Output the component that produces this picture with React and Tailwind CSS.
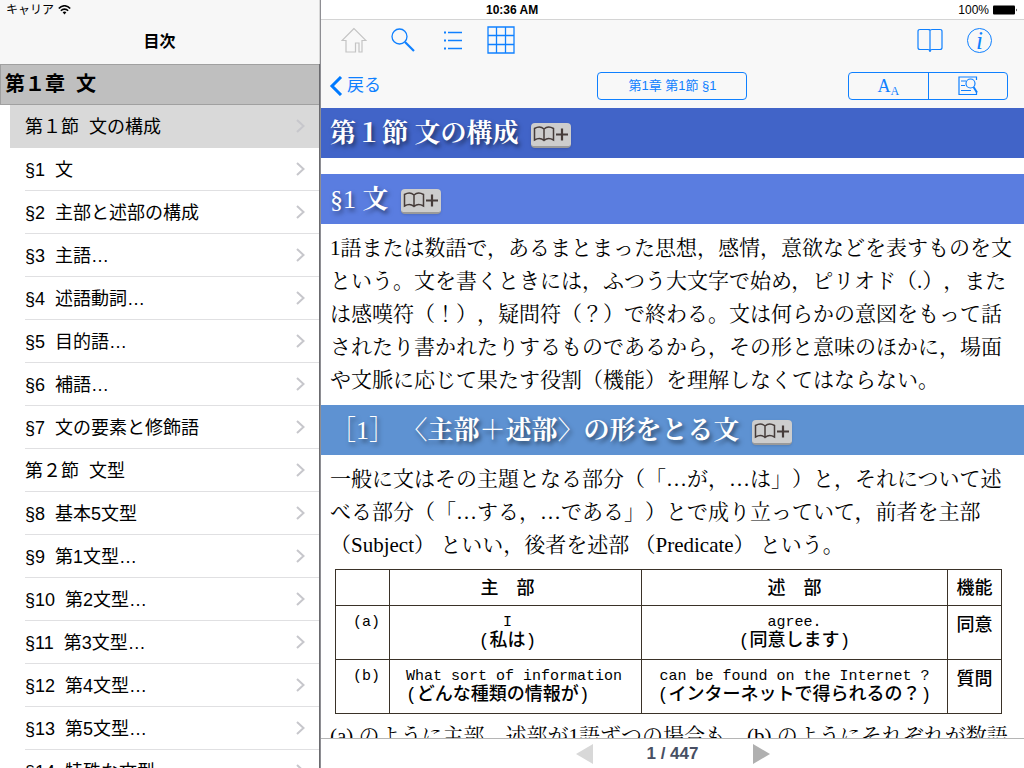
import React from "react";

const chapters = [
  { label: "第１節  文の構成", selected: true },
  { label: "§1  文" },
  { label: "§2  主部と述部の構成" },
  { label: "§3  主語…" },
  { label: "§4  述語動詞…" },
  { label: "§5  目的語…" },
  { label: "§6  補語…" },
  { label: "§7  文の要素と修飾語" },
  { label: "第２節  文型" },
  { label: "§8  基本5文型" },
  { label: "§9  第1文型…" },
  { label: "§10  第2文型…" },
  { label: "§11  第3文型…" },
  { label: "§12  第4文型…" },
  { label: "§13  第5文型…" },
  { label: "§14  特殊な文型" },
];

const Chevron = () => (
  <svg width="9" height="14" viewBox="0 0 9 14" fill="none" stroke="#c7c7cc" strokeWidth="2">
    <path d="M1 1l6.500 6L1 13" />
  </svg>
);

const BookmarkButton = () => (
  <button
    aria-label="しおりに追加"
    className="mt-1 flex h-[25px] w-10 items-center justify-center rounded border-b-2 border-[#9a9a9a] bg-[#cdcdcd] shadow"
  >
    <svg width="36" height="18" viewBox="0 0 36 18" fill="none" stroke="#463c3a" strokeWidth="1.500">
      <path d="M11 4C8.500 1.800 4.500 1.800 1.500 3.500V15c3-1.700 7-1.700 9.500.5 2.500-2.200 6.500-2.200 9.500-.5V3.500C17.500 1.800 13.500 1.800 11 4zM11 4v11" />
      <path d="M23 9.500h12M29 3.500v12" strokeWidth="2.200" />
    </svg>
  </button>
);

const Sidebar = () => (
  <aside className="flex w-[320px] shrink-0 flex-col overflow-hidden bg-white">
    <header className="h-16 shrink-0 border-r border-[#d8d8d8] bg-[#f7f7f7]">
      <div className="flex h-5 items-center gap-1 px-1.5 text-[12px]">
        キャリア
        <svg width="13" height="10" viewBox="0 0 13 10" fill="none" stroke="#000" strokeWidth="1.600">
          <path d="M.8 3.600C4-.2 9-.2 12.200 3.600M2.900 5.800c2-2.300 5.200-2.300 7.200 0" />
          <path d="M4.600 7.300c1.100-1.100 2.700-1.100 3.800 0L6.500 9.500z" fill="#000" stroke="none" />
        </svg>
      </div>
      <h1 className="flex h-11 items-center justify-center text-[16px] font-bold">目次</h1>
    </header>
    <div className="flex min-h-0 flex-1 flex-col border-r border-[#6b6b6f]">
      <h2 className="flex h-[41px] shrink-0 items-center whitespace-pre border border-r-0 border-[#a0a0a0] bg-[#bfbfbf] px-1 pb-0.5 text-[20px] font-bold">
        第１章  文
      </h2>
      <ul className="min-h-0 flex-1 overflow-hidden">
        {chapters.map((item) => (
          <li key={item.label} className={item.selected ? "bg-[#d9d9d9] ml-2.5 pl-[15px]" : "pl-[25px]"}>
            <a
              href="#"
              className={
                "flex h-[43px] items-center justify-between whitespace-pre border-b pr-3.5 text-[18px] " +
                (item.selected ? "border-[#d9d9d9]" : "border-[#e0e0e2]")
              }
            >
              <span className="pt-0.5">{item.label}</span>
              <Chevron />
            </a>
          </li>
        ))}
      </ul>
    </div>
  </aside>
);

const Toolbar = () => (
  <div className="flex h-11 shrink-0 items-center justify-between bg-[#f8f8f8] pr-8 pb-1 pl-5 text-[#0f80ff]">
    <div className="flex items-center">
      <button aria-label="ホーム" className="flex w-[26px] justify-center">
        <svg width="26" height="26" viewBox="0 0 26 26" fill="none" stroke="#c4c4c4" strokeWidth="1.200">
          <path d="M13 1.500L1 13.500h4V25h9.500v-9h3.500v9H21V13.500h4z" />
        </svg>
      </button>
      <button aria-label="検索" className="ml-6 flex w-6 justify-center">
        <svg width="24" height="24" viewBox="0 0 24 24" fill="none" stroke="currentColor">
          <circle cx="8.500" cy="8.500" r="7.500" strokeWidth="1.300" />
          <path d="M14 14l9 9" strokeWidth="2.200" />
        </svg>
      </button>
      <button aria-label="リスト" className="ml-7 flex w-5 justify-center">
        <svg width="20" height="20" viewBox="0 0 20 20" fill="none" stroke="currentColor" strokeWidth="1.300">
          <path d="M5 2.500h14M5 10.500h14M5 18.500h14" />
          <path d="M1 2.500h2M1 10.500h2M1 18.500h2" strokeWidth="2" />
        </svg>
      </button>
      <button aria-label="一覧表" className="ml-6 flex w-7 justify-center">
        <svg width="28" height="28" viewBox="0 0 28 28" fill="none" stroke="currentColor" strokeWidth="1.300">
          <path d="M1 1h26v26H1zM9.500 1v26M18.500 1v26M1 9.500h26M1 18.500h26" />
        </svg>
      </button>
    </div>
    <div className="flex items-center gap-6">
      <button aria-label="ブック">
        <svg width="26" height="24" viewBox="0 0 26 24" fill="none" stroke="currentColor" strokeWidth="1.200">
          <path d="M13 2.500C13 1.500 12 1.500 11 1.500H3Q1 1.500 1 3.500V19.500Q1 21.500 3 21.500H11Q13 21.500 13 24Q13 21.500 15 21.500H23Q25 21.500 25 19.500V3.500Q25 1.500 23 1.500H15C14 1.500 13 1.500 13 2.500zV23" />
        </svg>
      </button>
      <button
        aria-label="情報"
        className="flex h-[25px] w-[25px] items-center justify-center rounded-full border border-[#0f80ff] font-['Liberation_Serif',serif] text-[25px] leading-none italic"
      >
        i
      </button>
    </div>
  </div>
);

const NavBar = () => (
  <div className="grid h-11 shrink-0 grid-cols-3 items-center bg-[#f8f8f8] px-4 text-[#0f80ff]">
    <button className="-ml-2 flex items-center gap-1 text-[17px]">
      <svg width="14" height="20" viewBox="0 0 14 20" fill="none" stroke="#007aff" strokeWidth="3">
        <path d="M12 1L3 10l9 9" />
      </svg>
      戻る
    </button>
    <button className="h-7 w-[150px] justify-self-center rounded border border-[#0f80ff] text-[13px]">
      第1章 第1節 §1
    </button>
    <div className="flex h-7 w-[160px] justify-self-end rounded border border-[#0f80ff]">
      <button aria-label="文字サイズ" className="flex-1 border-r border-[#0f80ff] font-['Liberation_Serif',serif] text-[18px] leading-none">
        A<sub className="text-[12px]">A</sub>
      </button>
      <button aria-label="ページ内検索" className="flex flex-1 items-center justify-center">
        <svg width="20" height="20" viewBox="0 0 20 20" fill="none" stroke="currentColor" strokeWidth="1.200">
          <path d="M18.500 4V1H1v17.500h17.500v-3M3 5h5M3 9.500h4M3 14.500h10" />
          <circle cx="12.500" cy="7.500" r="4.500" />
          <path d="M15.500 11l3.500 5.500" strokeWidth="2" />
        </svg>
      </button>
    </div>
  </div>
);

const Latin = ({ children }) => (
  <span className="block font-['Liberation_Mono',monospace] text-[15px] leading-[18px]">{children}</span>
);

// Japanese gloss, set in half-width parentheses
const Gloss = ({ children }) => (
  <span className="block font-['Liberation_Mono','Noto_Sans_CJK_JP',monospace]">({children})</span>
);

const rows = [
  { no: "(a)", subject: "I", subjectJa: "私は", predicate: "agree.", predicateJa: "同意します", role: "同意" },
  {
    no: "(b)",
    subject: "What sort of information",
    subjectJa: "どんな種類の情報が",
    predicate: "can be found on the Internet ?",
    predicateJa: "インターネットで得られるの？",
    role: "質問",
    long: true,
  },
];

const ExampleTable = () => (
  <table className="w-full table-fixed border-collapse text-center text-[18px] leading-[18px] font-medium font-['Noto_Sans_CJK_JP',sans-serif] [&_td]:border [&_td]:border-[#3a3228] [&_th]:border [&_th]:border-[#3a3228] [&_th]:pb-1 [&_th]:font-medium">
    <colgroup>
      <col className="w-[54px]" />
      <col className="w-[252px]" />
      <col />
      <col className="w-[54px]" />
    </colgroup>
    <thead>
      <tr className="h-9">
        <th></th>
        <th className="pr-4">主　部</th>
        <th>述　部</th>
        <th>機能</th>
      </tr>
    </thead>
    <tbody>
      {rows.map((row) => (
        <tr key={row.no} className="h-[54px] align-top">
          <td className="pt-2 pl-2"><Latin>{row.no}</Latin></td>
          <td className={row.long ? "pt-2 pl-4 text-left" : "pt-2 pr-4"}>
            <Latin>{row.subject}</Latin>
            <Gloss>{row.subjectJa}</Gloss>
          </td>
          <td className="pt-2">
            <Latin>{row.predicate}</Latin>
            <Gloss>{row.predicateJa}</Gloss>
          </td>
          <td className="pt-2">{row.role}</td>
        </tr>
      ))}
    </tbody>
  </table>
);

const heading = "flex h-[50px] items-center gap-3 px-[9px] text-[26px] font-bold text-white [text-shadow:2px_3px_4px_rgba(0,0,0,0.5)]";
const paragraph = "px-[9px] text-[21px] leading-[33px]";

const Article = () => (
  <article className="min-h-0 flex-1 overflow-hidden font-['Liberation_Serif','Noto_Serif_CJK_JP','Noto_Sans_CJK_JP',serif]">
    <h2 className={heading + " bg-[#4164c8]"}>第１節 文の構成 <BookmarkButton /></h2>
    <h3 className={heading + " mt-4 bg-[#5a7de0]"}>
      <span><span className="font-normal">§1</span> 文</span> <BookmarkButton />
    </h3>
    <p className={paragraph + " py-2"}>
      1語または数語で，あるまとまった思想，感情，意欲などを表すものを文という。文を書くときには，ふつう大文字で始め，ピリオド（.），または感嘆符（！），疑問符（？）で終わる。文は何らかの意図をもって話されたり書かれたりするものであるから，その形と意味のほかに，場面や文脈に応じて果たす役割（機能）を理解しなくてはならない。
    </p>
    <h4 className={heading + " bg-[#5e92d2]"}>
      <span><span className="font-normal">［1］ 〈</span>主部＋述部<span className="font-normal">〉</span>の形をとる文</span> <BookmarkButton />
    </h4>
    <p className={paragraph + " pt-2"}>
      一般に文はその主題となる部分（「…が，…は」）と，それについて述べる部分（「…する，…である」）とで成り立っていて，前者を主部（Subject） といい，後者を述部 （Predicate） という。
    </p>
    <div className="mt-[7px] mr-[22px] mb-1.5 ml-3.5">
      <ExampleTable />
    </div>
    <p className={paragraph}>
      (a) のように主部，述部が1語ずつの場合も，(b) のようにそれぞれが数語から成る場合もある。
    </p>
  </article>
);

const App = () => {
  return (
    <div
      lang="ja"
      className="flex h-screen overflow-hidden bg-white text-black font-['Liberation_Sans','Noto_Sans_CJK_JP',sans-serif] [text-spacing-trim:space-all]"
    >
      <Sidebar />
      <main className="flex min-w-0 flex-1 flex-col border-l border-[#8e8e93]">
        {/* Status bar */}
        <div className="relative flex h-5 shrink-0 items-center justify-end gap-1 border-b border-[#d4d4d4] pr-1.5 text-[12px]">
          <span className="absolute left-[165px] font-bold">10:36 AM</span>
          100%
          <svg width="25" height="10" viewBox="0 0 25 10">
            <rect x="0" y="0.500" width="22" height="9" rx="1" />
            <path d="M23 3.500q1.800 1.500 0 3z" />
          </svg>
        </div>
        <Toolbar />
        <NavBar />
        <Article />
        {/* Page navigation */}
        <footer className="flex h-[30px] shrink-0 items-center justify-center gap-[54px] border-t border-[#b5b5b5] text-[17px] font-bold text-[#474f63]">
          <button aria-label="前のページ">
            <svg width="17" height="20" viewBox="0 0 17 20" fill="#d8d8d8"><path d="M17 0v20L0 10z" /></svg>
          </button>
          1 / 447
          <button aria-label="次のページ">
            <svg width="17" height="20" viewBox="0 0 17 20" fill="#b0b0b0"><path d="M0 0v20l17-10z" /></svg>
          </button>
        </footer>
      </main>
    </div>
  );
};

export default App;
